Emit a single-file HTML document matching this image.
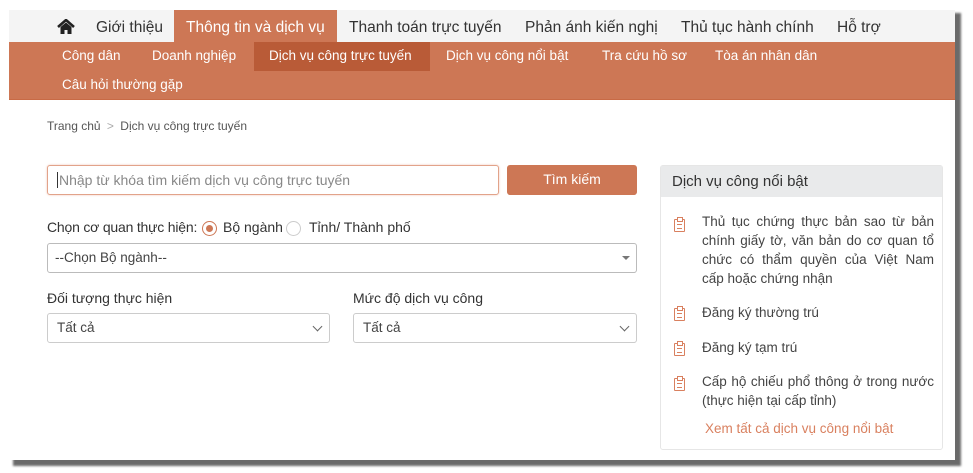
<!DOCTYPE html>
<html><head><meta charset="utf-8"><style>
*{box-sizing:border-box;margin:0;padding:0}
body{width:973px;height:473px;background:#fff;font-family:"Liberation Sans",sans-serif;color:#333;position:relative;overflow:hidden}
.shadow{position:absolute;left:13px;top:13px;width:948px;height:453px;background:#6a6a6a;filter:blur(1px)}
.frame{position:absolute;left:9px;top:10px;width:946px;height:450px;background:#fff;overflow:hidden}
.top{position:absolute;left:0;top:0;width:946px;height:32px;background:#f4f4f4;font-size:15.5px}
.top span{position:absolute;top:9px;color:#333}
.top .act{top:0;height:32px;background:#cd7755;color:#fff;padding:9px 12px 0}
.sub{position:absolute;left:0;top:32px;width:946px;height:58px;background:#cd7755;border-bottom:1px solid #c86a45;font-size:13.5px;color:#fff}
.sub span{position:absolute}
.sub .act{background:#b95b37;top:0;height:29px;padding:6px 15px 0}
.bc{position:absolute;left:38px;top:109px;font-size:12px;color:#555}
.abs{position:absolute}
.inp{border:1px solid #ccc;border-radius:3px;background:#fff;font-size:13.5px;color:#444}
.chev{position:absolute;right:8px;top:9px;width:7px;height:7px;border-right:1.3px solid #666;border-bottom:1.3px solid #666;transform:rotate(45deg)}
.panel{position:absolute;left:651px;top:155px;width:283px;height:285px;border:1px solid #e6e6e6;border-radius:3px}
.ph{height:31px;background:#e9eaeb;font-size:15px;padding:7px 11px;color:#333}
.it{position:absolute;left:41px;width:232px;font-size:13.5px;line-height:19px;color:#444;text-align:justify}
.ic{position:absolute;left:13px;width:11px;height:13px;border:1.3px solid #d9805f;border-radius:1px}
.ic:before{content:"";position:absolute;left:2px;top:-3px;width:4px;height:3px;border:1.3px solid #d9805f;background:#fff}
.ic:after{content:"";position:absolute;left:1.5px;top:4px;width:5px;height:3px;border-top:1.2px solid #d9805f;border-bottom:1.2px solid #d9805f}
</style></head><body>
<div class="shadow"></div>
<div class="frame">
<div class="top">
<svg class="abs" style="left:48px;top:9px" width="18" height="15" viewBox="0 0 18 15"><path d="M1 8L9 1l8 7" fill="none" stroke="#222" stroke-width="2.6"/><path d="M3.5 8v7h4v-4h3v4h4V8L9 3.5z" fill="#222"/></svg>
<span style="left:87px">Giới thiệu</span>
<span class="act" style="left:165px;width:163px">Thông tin và dịch vụ</span>
<span style="left:340px">Thanh toán trực tuyến</span>
<span style="left:516px">Phản ánh kiến nghị</span>
<span style="left:672px">Thủ tục hành chính</span>
<span style="left:828px">Hỗ trợ</span>
</div>
<div class="sub">
<span style="left:53px;top:6px">Công dân</span>
<span style="left:143px;top:6px">Doanh nghiệp</span>
<span class="act" style="left:245px;width:176px">Dịch vụ công trực tuyến</span>
<span style="left:437px;top:6px">Dịch vụ công nổi bật</span>
<span style="left:593px;top:6px">Tra cứu hồ sơ</span>
<span style="left:706px;top:6px">Tòa án nhân dân</span>
<span style="left:53px;top:35px">Câu hỏi thường gặp</span>
</div>
<div class="bc">Trang chủ <span style="color:#aaa;margin:0 3px">&gt;</span> Dịch vụ công trực tuyến</div>
<div class="abs inp" style="left:38px;top:155px;width:452px;height:30px;border-color:#e2a38a;box-shadow:0 0 2px #f0c8b8;padding:6px 9px;color:#888;font-size:14px"><span style="border-left:1px solid #333;padding-left:1px">Nhập từ khóa tìm kiếm dịch vụ công trực tuyến</span></div>
<div class="abs" style="left:498px;top:155px;width:130px;height:30px;background:#cd7755;border-radius:3px;color:#fff;font-size:14px;text-align:center;line-height:29px">Tìm kiếm</div>
<div class="abs" style="left:38px;top:209px;font-size:14px;color:#333;letter-spacing:-0.2px">Chọn cơ quan thực hiện:</div>
<div class="abs" style="left:193px;top:211px;width:15px;height:15px;border:1px solid #cd7755;border-radius:50%"><div style="margin:3px;width:7px;height:7px;background:#cd7755;border-radius:50%"></div></div>
<div class="abs" style="left:214px;top:209px;font-size:14px">Bộ ngành</div>
<div class="abs" style="left:277px;top:211px;width:15px;height:15px;border:1px solid #ccc;border-radius:50%"></div>
<div class="abs" style="left:300px;top:209px;font-size:14px">Tỉnh/ Thành phố</div>
<div class="abs inp" style="left:38px;top:233px;width:590px;height:30px;padding:6px 7px;border-color:#bbb">--Chọn Bộ ngành--<div style="position:absolute;right:6px;top:12px;border:4px solid transparent;border-top:4px solid #777"></div></div>
<div class="abs" style="left:38px;top:280px;font-size:14px">Đối tượng thực hiện</div>
<div class="abs" style="left:344px;top:280px;font-size:14px">Mức độ dịch vụ công</div>
<div class="abs inp" style="left:38px;top:303px;width:283px;height:30px;padding:6px 9px">Tất cả<div class="chev"></div></div>
<div class="abs inp" style="left:344px;top:303px;width:284px;height:30px;padding:6px 9px">Tất cả<div class="chev"></div></div>
<div class="panel">
<div class="ph">Dịch vụ công nổi bật</div>
<div class="ic" style="top:53px"></div>
<div class="it" style="top:46px">Thủ tục chứng thực bản sao từ bản chính giấy tờ, văn bản do cơ quan tổ chức có thẩm quyền của Việt Nam cấp hoặc chứng nhận</div>
<div class="ic" style="top:142px"></div>
<div class="it" style="top:137px">Đăng ký thường trú</div>
<div class="ic" style="top:177px"></div>
<div class="it" style="top:172px">Đăng ký tạm trú</div>
<div class="ic" style="top:212px"></div>
<div class="it" style="top:206px">Cấp hộ chiếu phổ thông ở trong nước (thực hiện tại cấp tỉnh)</div>
<div class="abs" style="left:44px;top:255px;font-size:13.5px;color:#d9805f">Xem tất cả dịch vụ công nổi bật</div>
</div>
</div>
</body></html>
